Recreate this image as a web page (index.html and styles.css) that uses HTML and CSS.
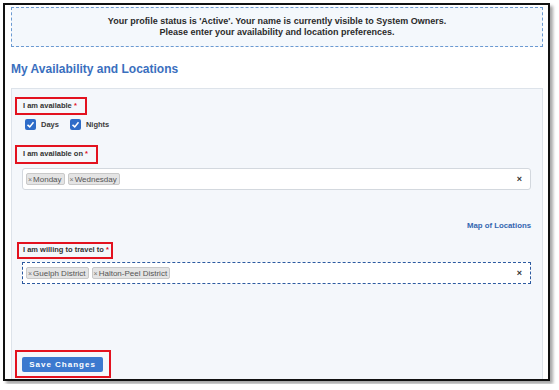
FILE: index.html
```html
<!DOCTYPE html>
<html lang="en">
<head>
  <meta charset="UTF-8">
  <title>My Availability and Locations</title>
  <link rel="stylesheet" href="styles.css">
</head>
<body>
  <div class="frame">
    <div class="notice">
      <p>Your profile status is 'Active'. Your name is currently visible to System Owners.</p>
      <p>Please enter your availability and location preferences.</p>
    </div>

    <h1 class="page-title">My Availability and Locations</h1>

    <div class="panel">
      <div class="field">
        <span class="annot"><label>I am available <span class="req">*</span></label></span>
        <div class="checks">
          <span class="check"><span class="box"><svg viewBox="0 0 12 12" width="9" height="9"><path d="M2 6.5 L5 9.2 L10 3" fill="none" stroke="#fff" stroke-width="2"/></svg></span>Days</span>
          <span class="check"><span class="box"><svg viewBox="0 0 12 12" width="9" height="9"><path d="M2 6.5 L5 9.2 L10 3" fill="none" stroke="#fff" stroke-width="2"/></svg></span>Nights</span>
        </div>
      </div>

      <div class="field field-days">
        <span class="annot"><label>I am available on <span class="req">*</span></label></span>
        <div class="select">
          <span class="tag"><span class="x">×</span>Monday</span>
          <span class="tag"><span class="x">×</span>Wednesday</span>
          <span class="clear">×</span>
        </div>
      </div>

      <div class="map-link"><a href="#">Map of Locations</a></div>

      <div class="field field-travel">
        <span class="annot annot-tight"><label>I am willing to travel to <span class="req">*</span></label></span>
        <div class="select focused">
          <span class="tag"><span class="x">×</span>Guelph District</span>
          <span class="tag"><span class="x">×</span>Halton-Peel District</span>
          <span class="clear">×</span>
        </div>
      </div>

      <div class="actions">
        <span class="annot annot-btn"><button class="save-button">Save Changes</button></span>
      </div>
    </div>
  </div>
</body>
</html>
```

FILE: styles.css
```css
:root {
  --title-blue: #3a6fbe;
  --link-blue: #3366b0;
  --check-blue: #2e6cc8;
  --button-blue: #3c79cf;
  --annot-red: #e3121f;
  --panel-bg: #f4f7fb;
  --text-color: #2b2b2b;
}
html, body {
  margin: 0;
  padding: 0;
  background: #fff;
  overflow: hidden;
}
body {
  font-family: "Liberation Sans", Arial, sans-serif;
  color: var(--text-color);
}
.frame {
  box-sizing: border-box;
  width: 547px;
  height: 378px;
  margin: 3px;
  padding: 2px 5px 0 6px;
  border: 2px solid #111;
  box-shadow: 3px 3px 3px rgba(0,0,0,0.35);
  overflow: hidden;
}
.notice {
  box-sizing: border-box;
  height: 40px;
  border: 1px dashed #6b9ad2;
  background-color: #f4f8fc;
  display: flex;
  flex-direction: column;
  justify-content: center;
  text-align: center;
  font-size: 9px;
  font-weight: 700;
  line-height: 11px;
}
.notice p {
  margin: 0;
}
.page-title {
  margin: 14px 0 11px;
  font-size: 12px;
  line-height: 16px;
  font-weight: 700;
  color: var(--title-blue);
}
.panel {
  min-height: 400px;
  border: 1px solid #dde3ea;
  background-color: var(--panel-bg);
  padding: 8px 11px 0 10px;
}
.annot {
  display: block;
  width: fit-content;
  border: 2px solid var(--annot-red);
  padding: 2px 8px 2px 6px;
  margin-left: -7px;
  font-size: 7.5px;
  line-height: 10px;
}
.field-days .annot {
  padding-bottom: 3px;
}
.annot-tight {
  padding: 1px 2px 2px 4px;
  margin-left: -5px;
}
.annot-btn {
  padding: 5px 6px 4px 5px;
  margin-left: -7px;
}
label {
  font-weight: 700;
  color: #333;
}
.req {
  color: var(--annot-red);
}
.checks {
  display: flex;
  gap: 11px;
  margin: 3px 0 0 3px;
  height: 12px;
  align-items: center;
}
.check {
  display: flex;
  align-items: center;
  gap: 5px;
  font-size: 7.5px;
  font-weight: 700;
  color: #3a3a3a;
}
.box {
  width: 11px;
  height: 11px;
  border-radius: 2px;
  background-color: var(--check-blue);
  display: flex;
  align-items: center;
  justify-content: center;
}
.field-days {
  margin-top: 15px;
}
.select {
  box-sizing: border-box;
  height: 22px;
  margin-top: 4px;
  background: #fff;
  border: 1px solid #d3d8de;
  border-radius: 3px;
  display: flex;
  align-items: center;
  gap: 3px;
  padding: 0 8px 0 3px;
}
.select.focused {
  margin-top: 3px;
  border: 1px dashed #2c5aa0;
  border-radius: 0;
}
.tag {
  box-sizing: border-box;
  height: 12px;
  display: inline-flex;
  align-items: center;
  padding: 0 2px 0 1px;
  background-color: #e4e4e4;
  border: 1px solid #c9c9c9;
  border-radius: 2px;
  font-size: 8px;
  color: #555;
}
.tag .x {
  font-size: 7px;
  color: #777;
  margin-right: 1px;
}
.clear {
  margin-left: auto;
  font-size: 9px;
  font-weight: 700;
  color: #333;
}
.map-link {
  text-align: right;
  margin-top: 31px;
  font-size: 7.8px;
  line-height: 10px;
}
.map-link a {
  font-weight: 700;
  color: var(--link-blue);
  text-decoration: none;
}
.field-travel {
  margin-top: 11px;
}
.actions {
  margin-top: 66px;
}
.save-button {
  display: block;
  width: 81px;
  height: 15px;
  padding: 0;
  border: none;
  border-radius: 2px;
  background-color: var(--button-blue);
  color: #fff;
  font-family: "Liberation Sans", Arial, sans-serif;
  font-size: 8px;
  font-weight: 700;
  letter-spacing: 1px;
  cursor: pointer;
}
```
